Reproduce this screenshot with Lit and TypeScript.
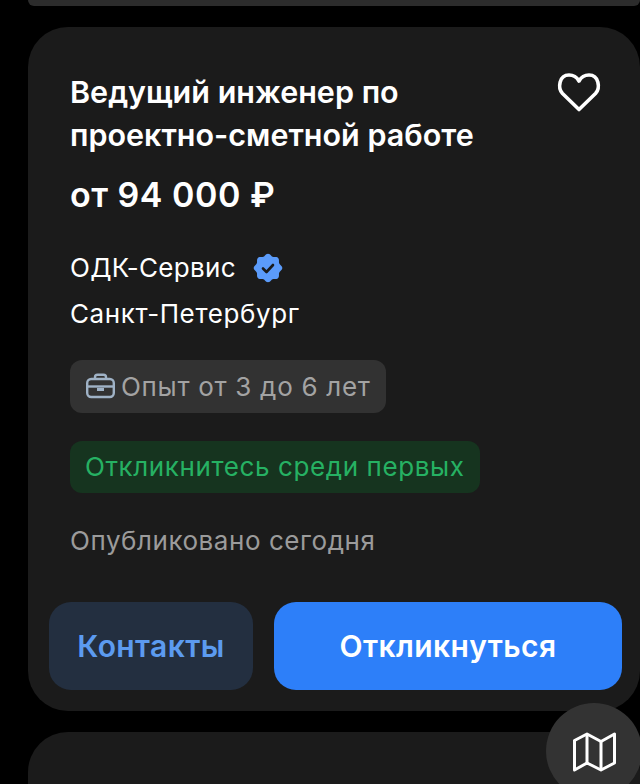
import { LitElement, html, css, svg } from "lit";
import { customElement } from "lit/decorators.js";

// eight soft lobes, like the verified mark in the reference
function badgePath(): string {
  const pts: string[] = [];
  for (let i = 0; i < 96; i++) {
    const a = (i / 96) * Math.PI * 2 - Math.PI / 2;
    const r = 13.2 + 1.1 * Math.cos(8 * (a + Math.PI / 2));
    pts.push(`${(15 + r * Math.cos(a)).toFixed(2)} ${(15 + r * Math.sin(a)).toFixed(2)}`);
  }
  return `M${pts.join(" L")} Z`;
}

@customElement("app-root")
export class AppRoot extends LitElement {
  static override styles = css`
    :host {
      display: block;
      position: relative;
      width: 640px;
      height: 784px;
      overflow: hidden;
      background: #000;
      font-family: Inter, "Liberation Sans", sans-serif;
      color: #fff;
    }
    .list {
      display: flex;
      flex-direction: column;
      gap: 21px;
      padding-left: 28px;
    }
    .prev {
      height: 6px;
      background: #2c2c2c;
      border-radius: 0 0 12px 12px;
    }
    .card {
      background: #1b1b1b;
      border-radius: 40px;
      height: 684px;
      box-sizing: border-box;
      padding: 43px 18px 21px 21px;
      display: flex;
      flex-direction: column;
      align-items: flex-start;
    }
    .next {
      background: #1b1b1b;
      border-radius: 40px 40px 0 0;
      height: 60px;
    }
    .head {
      display: flex;
      justify-content: space-between;
      align-self: stretch;
      padding-left: 21px;
    }
    .title {
      font-size: 30.500px;
      font-weight: 600;
      line-height: 43px;
      margin: 0;
    }
    .heart {
      width: 46px;
      height: 46px;
      margin: 0 20px 0 0;
      flex: none;
    }
    .salary {
      font-size: 34px;
      font-weight: 600;
      line-height: 40px;
      letter-spacing: 0.5px;
      margin: 19px 0 0 21px;
    }
    .company {
      display: flex;
      align-items: center;
      gap: 17px;
      font-size: 26px;
      letter-spacing: 0.3px;
      line-height: 36px;
      margin: 35px 0 0 21px;
    }
    .badge {
      width: 30px;
      height: 30px;
    }
    .city {
      font-size: 26px;
      letter-spacing: 0.6px;
      line-height: 36px;
      margin: 10px 0 0 21px;
    }
    .chip {
      display: inline-flex;
      align-items: center;
      height: 53px;
      box-sizing: border-box;
      border-radius: 12px;
      padding: 0 15px;
      font-size: 26px;
      letter-spacing: 0.6px;
      margin-left: 21px;
    }
    .exp {
      background: #323232;
      color: #a3a3a3;
      margin-top: 28px;
      gap: 6px;
      letter-spacing: 0.7px;
    }
    .exp svg {
      width: 30px;
      height: 30px;
    }
    .early {
      background: #16341f;
      color: #26b163;
      margin-top: 28px;
    }
    .published {
      font-size: 26px;
      letter-spacing: 0.55px;
      line-height: 36px;
      color: #9b9b9b;
      margin: 30px 0 0 21px;
    }
    .actions {
      display: flex;
      gap: 21px;
      margin-top: 43px;
      align-self: stretch;
    }
    .btn {
      height: 88px;
      border: 0;
      border-radius: 22px;
      font: 600 30px Inter, "Liberation Sans", sans-serif;
      letter-spacing: 0.4px;
    }
    .contacts {
      width: 204px;
      background: #232f40;
      color: #5c9bf0;
    }
    .apply {
      flex: 1;
      background: #2d7ff9;
      color: #fff;
    }
    .map {
      position: absolute;
      left: 546px;
      top: 703px;
      width: 96px;
      height: 96px;
      border-radius: 50%;
      background: #333;
      display: flex;
      align-items: center;
      justify-content: center;
    }
    .map svg {
      width: 46px;
      height: 46px;
    }
  `;

  override render() {
    return html`
      <div class="list">
        <div class="prev"></div>
        <article class="card">
          <div class="head">
            <h2 class="title">Ведущий инженер по<br />проектно-сметной работе</h2>
            <svg class="heart" viewBox="0 0 46 46" fill="none" stroke="#fff" stroke-width="3.600" stroke-linejoin="round">
              <path d="M23 39.500 L6.500 23.500 C1.500 18 3 5 13 5 C18 5 21 7.500 23 11 C25 7.500 28 5 33 5 C43 5 44.500 18 39.500 23.500 Z" />
            </svg>
          </div>
          <div class="salary">от 94 000 ₽</div>
          <div class="company">
            <span>ОДК-Сервис</span>
            <svg class="badge" viewBox="0 0 30 30">
              ${svg`<path fill="#5b9bfa" d=${badgePath()} />`}
              <path fill="none" stroke="#1b1b1b" stroke-width="2.600" stroke-linecap="round" stroke-linejoin="round" d="M10 15.500 L13.500 19 L20 12" />
            </svg>
          </div>
          <div class="city">Санкт-Петербург</div>
          <div class="chip exp">
            <svg viewBox="0 0 30 30" fill="none" stroke="#9fb2c6" stroke-width="2.400" stroke-linejoin="round">
              <rect x="2.200" y="8" width="26.600" height="18" rx="4" />
              <path d="M2.200 15.500 H28.800" />
              <path d="M10 8 V6 C10 4.500 11 3.700 12.500 3.700 H18.500 C20 3.700 21 4.500 21 6 V8" />
              <path d="M12 18.500 H19" stroke-width="3" />
            </svg>
            <span>Опыт от 3 до 6 лет</span>
          </div>
          <div class="chip early">Откликнитесь среди первых</div>
          <div class="published">Опубликовано сегодня</div>
          <div class="actions">
            <button class="btn contacts">Контакты</button>
            <button class="btn apply">Откликнуться</button>
          </div>
        </article>
        <div class="next"></div>
      </div>
      <div class="map">
        <svg viewBox="0 0 46 46" fill="none" stroke="#fff" stroke-width="3" stroke-linejoin="round">
          <path d="M3.500 12.500 L16 6 L30 13.500 L43.500 6 V35 L30 42 L16 35 L3.500 42 Z" />
          <path d="M16 6 V35 M30 13.500 V42" />
        </svg>
      </div>
    `;
  }
}
